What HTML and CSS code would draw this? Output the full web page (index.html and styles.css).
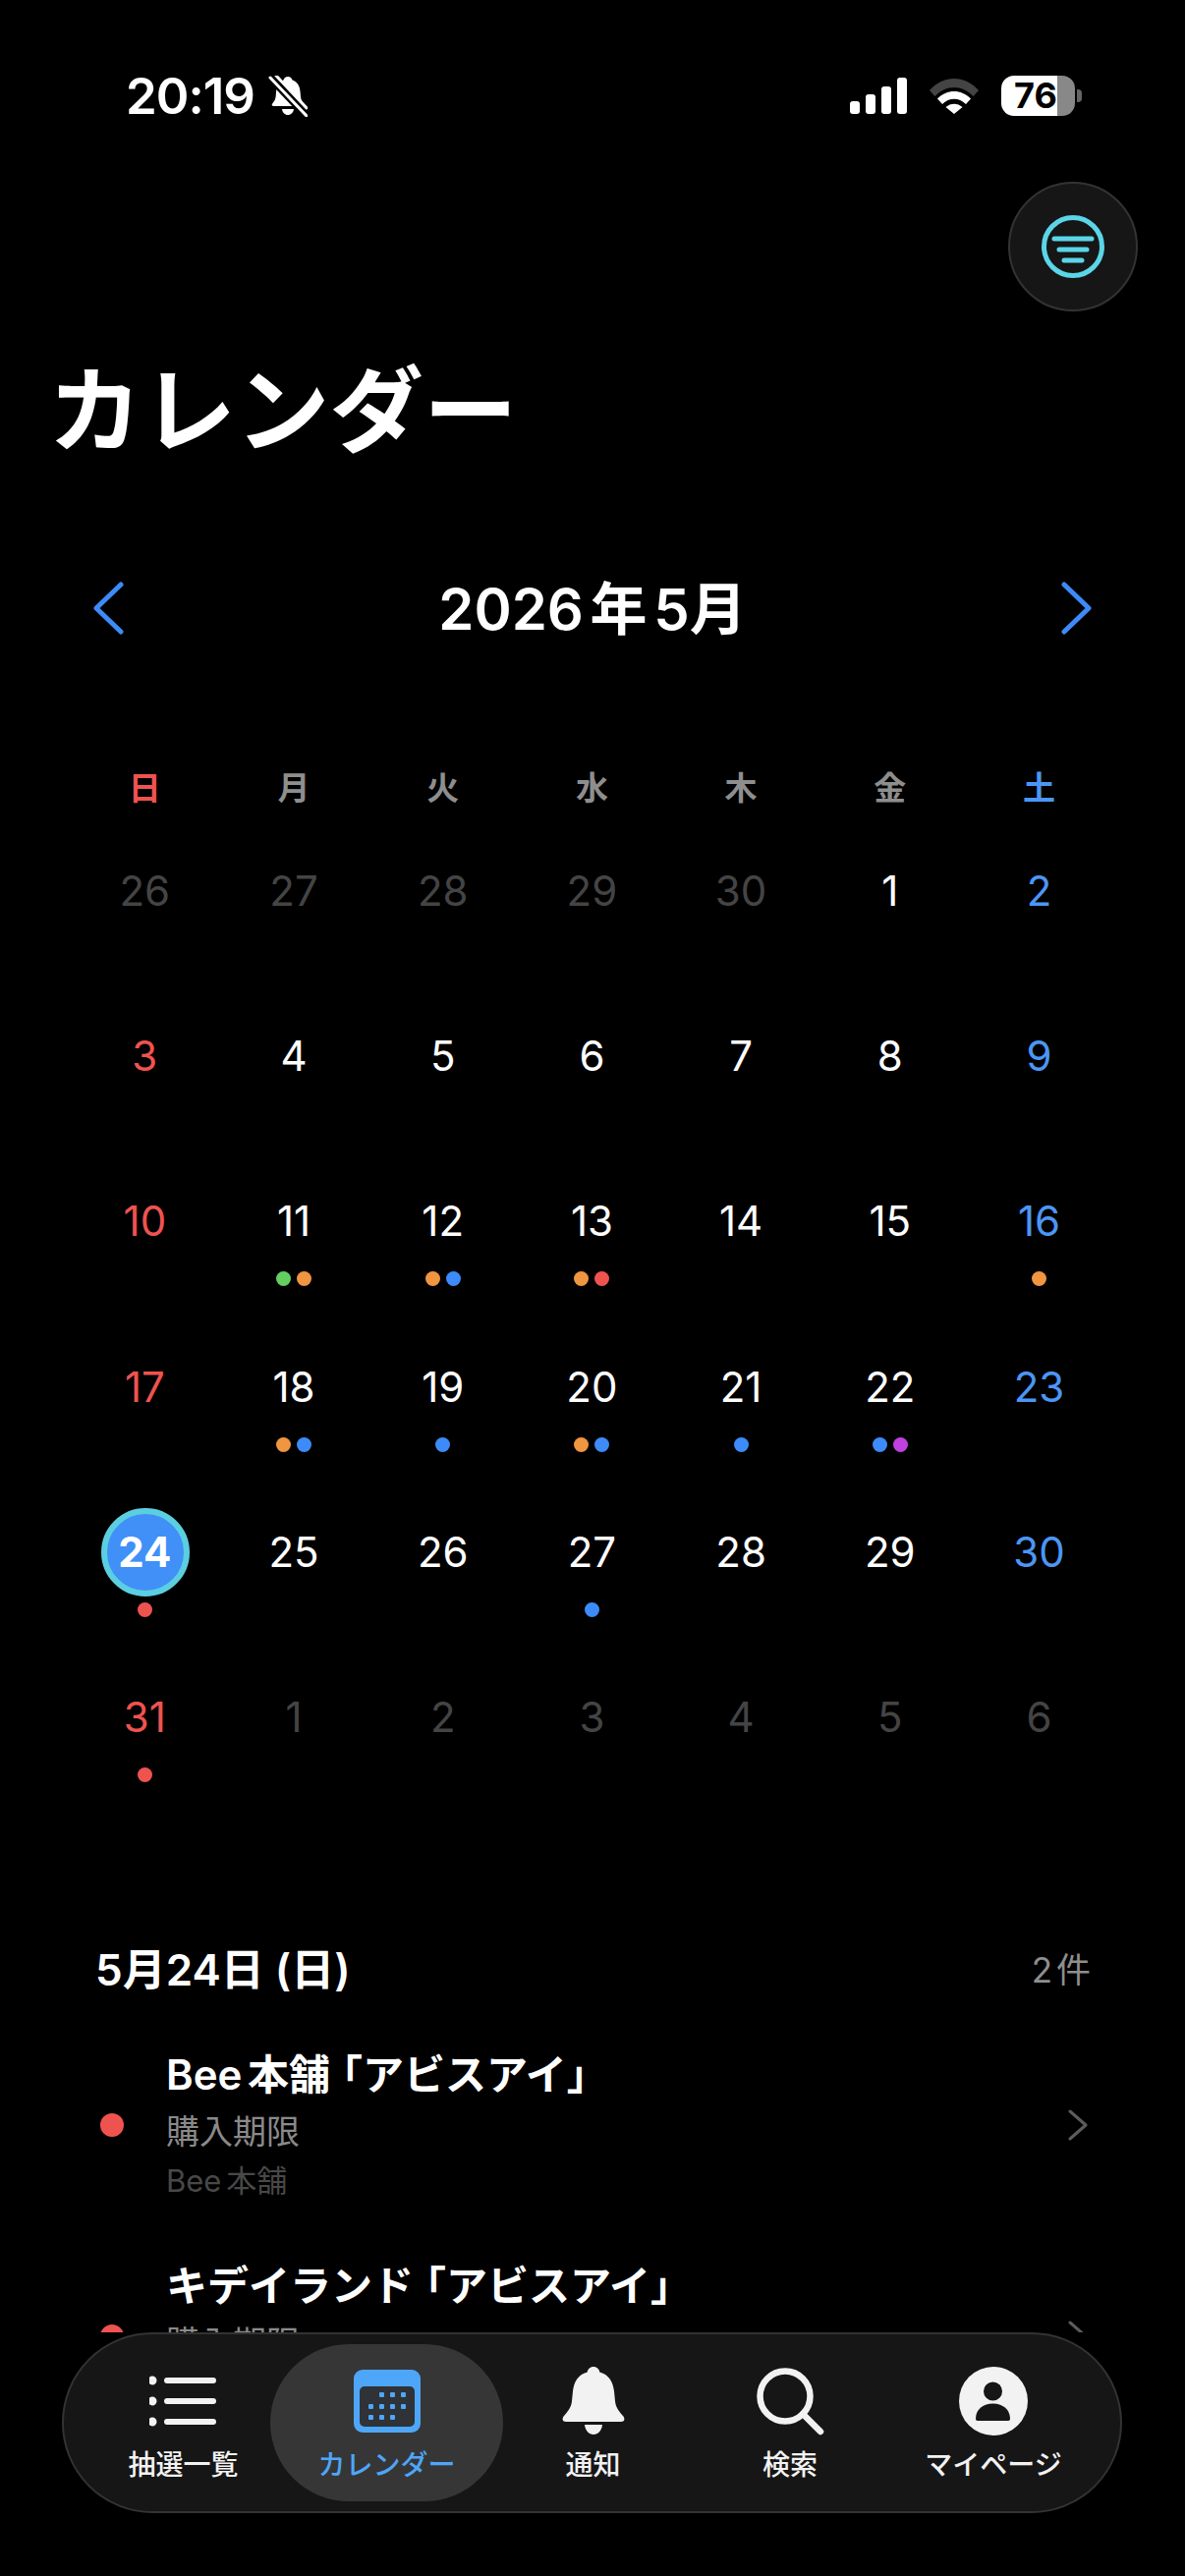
FILE: index.html
```html
<!DOCTYPE html>
<html lang="ja">
  <head>
    <meta charset="UTF-8" />
    <meta name="viewport" content="width=device-width, initial-scale=1.0" />
    <title>カレンダー</title>
    <link rel="stylesheet" href="styles.css">
  </head>
  <body>
    <main id="screen">
      <div class="status">
        <div class="status-left">
          <span class="time">20:19</span>
          <svg class="bell-off" width="40" height="42" viewBox="0 0 40 42">
            <path d="M20 1c2.4 0 4 1.500 4.600 3.600 5 1.800 7.400 6 7.900 11.400l.5 5.500c.2 2.800 1.500 4.700 3.300 6.900.9 1.200.3 2.600-1.300 2.600H5.500c-1.700 0-2.300-1.500-1.300-2.600 1.800-2.200 3.100-4.100 3.400-6.900l.5-5.500c.4-5 2.500-9.300 7.200-11.200C16 2.600 17.600 1 20 1zM14 34h12c-.4 3.500-2.900 6-6 6s-5.600-2.500-6-6z" fill="#fff"/>
            <path d="M2 1l37 39" stroke="#000" stroke-width="9"/>
            <path d="M2 2l37 39M8 0l31 33" stroke="#fff" stroke-width="3" stroke-linecap="round"/>
          </svg>
        </div>
        <div class="status-right">
          <div class="signal">
            <i class="bar-1"></i><i class="bar-2"></i><i class="bar-3"></i><i class="bar-4"></i>
          </div>
          <svg class="wifi" width="52" height="37" viewBox="0 0 52 37">
            <path d="M1 13C15-3 37-3 51 13l-5.500 6C34 7 18 7 6.500 19z" fill="#444"/>
            <path d="M9 21.500c9.500-10 24.500-10 34 0l-5 5.500c-7-7-17-7-24 0z" fill="#fff"/>
            <path d="M17.500 30c5-4.500 12-4.500 17 0L26 37z" fill="#fff"/>
          </svg>
          <div class="battery"><span class="battery-level">76</span></div>
          <i class="battery-cap"></i>
        </div>
      </div>

      <div class="top-actions">
        <button class="filter-btn">
          <svg width="66" height="66" viewBox="0 0 66 66" fill="none" stroke="#5bd5e8">
            <circle cx="33" cy="33" r="29.500" stroke-width="5"/>
            <path d="M14 25h38M19 36h28M24 47h18" stroke-width="5" stroke-linecap="round"/>
          </svg>
        </button>
      </div>

      <h1 class="page-title">カレンダー</h1>

      <div class="month-nav">
        <svg width="34" height="54" viewBox="0 0 34 54" fill="none"><path d="M30 3L5 27l25 24" stroke="#3d8bf8" stroke-width="5" stroke-linecap="round" stroke-linejoin="round"/></svg>
        <span class="month-label">2026 年 5月</span>
        <svg width="34" height="54" viewBox="0 0 34 54" fill="none"><path d="M4 3l25 24L4 51" stroke="#3d8bf8" stroke-width="5" stroke-linecap="round" stroke-linejoin="round"/></svg>
      </div>

      <div class="week">
        <span class="sun">日</span><span>月</span><span>火</span><span>水</span><span>木</span><span>金</span><span class="sat">土</span>
      </div>

      <div class="days">
        <div class="day out"><span class="num">26</span></div>
        <div class="day out"><span class="num">27</span></div>
        <div class="day out"><span class="num">28</span></div>
        <div class="day out"><span class="num">29</span></div>
        <div class="day out"><span class="num">30</span></div>
        <div class="day"><span class="num">1</span></div>
        <div class="day sat"><span class="num">2</span></div>

        <div class="day sun"><span class="num">3</span></div>
        <div class="day"><span class="num">4</span></div>
        <div class="day"><span class="num">5</span></div>
        <div class="day"><span class="num">6</span></div>
        <div class="day"><span class="num">7</span></div>
        <div class="day"><span class="num">8</span></div>
        <div class="day sat"><span class="num">9</span></div>

        <div class="day sun"><span class="num">10</span></div>
        <div class="day"><span class="num">11</span><div class="dots"><i class="green"></i><i class="orange"></i></div></div>
        <div class="day"><span class="num">12</span><div class="dots"><i class="orange"></i><i class="blue"></i></div></div>
        <div class="day"><span class="num">13</span><div class="dots"><i class="orange"></i><i class="red"></i></div></div>
        <div class="day"><span class="num">14</span></div>
        <div class="day"><span class="num">15</span></div>
        <div class="day sat"><span class="num">16</span><div class="dots"><i class="orange"></i></div></div>

        <div class="day sun"><span class="num">17</span></div>
        <div class="day"><span class="num">18</span><div class="dots"><i class="orange"></i><i class="blue"></i></div></div>
        <div class="day"><span class="num">19</span><div class="dots"><i class="blue"></i></div></div>
        <div class="day"><span class="num">20</span><div class="dots"><i class="orange"></i><i class="blue"></i></div></div>
        <div class="day"><span class="num">21</span><div class="dots"><i class="blue"></i></div></div>
        <div class="day"><span class="num">22</span><div class="dots"><i class="blue"></i><i class="purple"></i></div></div>
        <div class="day sat"><span class="num">23</span></div>

        <div class="day today"><span class="num">24</span><div class="dots"><i class="red"></i></div></div>
        <div class="day"><span class="num">25</span></div>
        <div class="day"><span class="num">26</span></div>
        <div class="day"><span class="num">27</span><div class="dots"><i class="blue"></i></div></div>
        <div class="day"><span class="num">28</span></div>
        <div class="day"><span class="num">29</span></div>
        <div class="day sat"><span class="num">30</span></div>

        <div class="day sun"><span class="num">31</span><div class="dots"><i class="red"></i></div></div>
        <div class="day out"><span class="num">1</span></div>
        <div class="day out"><span class="num">2</span></div>
        <div class="day out"><span class="num">3</span></div>
        <div class="day out"><span class="num">4</span></div>
        <div class="day out"><span class="num">5</span></div>
        <div class="day out"><span class="num">6</span></div>
      </div>

      <div class="list-head">
        <span class="list-date">5月24日 (日)</span>
        <span class="list-count">2 件</span>
      </div>

      <div class="item">
        <i class="item-dot"></i>
        <div class="item-text">
          <div class="item-title">Bee 本舗<span class="open">「</span>アビスアイ」</div>
          <div class="item-sub">購入期限</div>
          <div class="item-shop">Bee 本舗</div>
        </div>
        <svg class="item-arrow" width="22" height="32" viewBox="0 0 22 32" fill="none"><path d="M3 2l16 14L3 30" stroke="#5c5c5c" stroke-width="3" stroke-linecap="round" stroke-linejoin="round"/></svg>
      </div>
      <div class="item">
        <i class="item-dot"></i>
        <div class="item-text">
          <div class="item-title">キデイランド<span class="open">「</span>アビスアイ」</div>
          <div class="item-sub">購入期限</div>
        </div>
        <svg class="item-arrow" width="22" height="32" viewBox="0 0 22 32" fill="none"><path d="M3 2l16 14L3 30" stroke="#5c5c5c" stroke-width="3" stroke-linecap="round" stroke-linejoin="round"/></svg>
      </div>
    </main>

    <nav class="tabbar">
      <div class="tab">
        <svg width="70" height="70" viewBox="0 0 70 70" fill="#f2f2f2">
          <circle cx="3" cy="14" r="4.500"/><circle cx="3" cy="35" r="4.500"/><circle cx="3" cy="56" r="4.500"/>
          <rect x="15" y="11" width="53" height="6" rx="3"/><rect x="15" y="32" width="53" height="6" rx="3"/><rect x="15" y="53" width="53" height="6" rx="3"/>
        </svg>
        <span>抽選一覧</span>
      </div>
      <div class="tab active">
        <svg width="70" height="70" viewBox="0 0 70 70">
          <rect x="1" y="3" width="68" height="64" rx="9" fill="#4ea6f8"/>
          <rect x="7" y="20" width="56" height="41" rx="5" fill="#2f3236"/>
          <g fill="#4ea6f8">
            <rect x="27" y="26" width="5" height="5" rx="1"/><rect x="38" y="26" width="5" height="5" rx="1"/><rect x="49" y="26" width="5" height="5" rx="1"/>
            <rect x="16" y="38" width="5" height="5" rx="1"/><rect x="27" y="38" width="5" height="5" rx="1"/><rect x="38" y="38" width="5" height="5" rx="1"/><rect x="49" y="38" width="5" height="5" rx="1"/>
            <rect x="16" y="49" width="5" height="5" rx="1"/><rect x="27" y="49" width="5" height="5" rx="1"/><rect x="38" y="49" width="5" height="5" rx="1"/>
          </g>
        </svg>
        <span>カレンダー</span>
      </div>
      <div class="tab">
        <svg width="70" height="70" viewBox="0 0 70 70" fill="#f2f2f2">
          <path d="M35 0c3.500 0 6 2.500 6.300 5.500C51 8 55 16 56 25l1 10c.6 6 3 9 8 15 2.500 3 1.500 6-2 6H7c-3.500 0-4.500-3-2-6 5-6 7.400-9 8-15l1-10c1-9 5-17 14.700-19.500C29 2.500 31.500 0 35 0z"/>
          <path d="M26 59h18c-.5 6-4.500 10-9 10s-8.500-4-9-10z"/>
        </svg>
        <span>通知</span>
      </div>
      <div class="tab">
        <svg width="70" height="70" viewBox="0 0 70 70" fill="none" stroke="#f2f2f2" stroke-width="6.500" stroke-linecap="round">
          <circle cx="30" cy="30" r="25.500"/>
          <path d="M48 48l18 18"/>
        </svg>
        <span>検索</span>
      </div>
      <div class="tab">
        <svg width="70" height="70" viewBox="0 0 70 70">
          <circle cx="35" cy="35" r="35" fill="#f2f2f2"/>
          <circle cx="34.500" cy="25" r="9.500" fill="#161616"/>
          <path d="M17 53c0-10 8-15.500 17.500-15.500S52 43 52 53c0 1.300-.7 2-2 2H19c-1.300 0-2-.7-2-2z" fill="#161616"/>
        </svg>
        <span>マイページ</span>
      </div>
    </nav>
  </body>
</html>
```

FILE: styles.css
```css
*,
*::before {
  box-sizing: border-box;
}
body {
  margin: 0;
  background: #000;
  color: #fff;
  font-family: Inter, "Noto Sans CJK JP", sans-serif;
}
#screen {
  height: 2374px;
  overflow: hidden;
}
i {
  display: block;
}

/* status bar */
.status {
  display: flex;
  justify-content: space-between;
  height: 185px;
  padding: 77px 105px 0 128px;
}
.status-left {
  display: flex;
  gap: 14px;
  height: 41px;
  align-items: center;
}
.time {
  font-size: 51px;
  line-height: 41px;
  font-weight: 600;
  letter-spacing: -1px;
}
.status-right {
  display: flex;
  align-items: flex-start;
  height: 41px;
}
.signal {
  display: flex;
  align-items: flex-end;
  gap: 6px;
  height: 37px;
  margin-top: 2px;
  margin-right: 22px;
}
.signal i {
  width: 10px;
  background: #fff;
  border-radius: 3px;
}
.bar-1 { height: 13px; }
.bar-2 { height: 20px; }
.bar-3 { height: 28px; }
.bar-4 { height: 37px; }
.wifi {
  margin-top: 2px;
  margin-right: 22px;
}
.battery {
  width: 75px;
  height: 41px;
  border-radius: 13px;
  background: linear-gradient(90deg, #fff 76%, #888 76%);
  color: #000;
  text-align: center;
}
.battery-level {
  display: block;
  width: 70px;
  font-size: 36px;
  line-height: 41px;
  font-weight: 700;
}
.battery-cap {
  width: 5px;
  height: 13px;
  margin: 14px 0 0 2px;
  background: #666;
  border-radius: 0 4px 4px 0;
}

.top-actions {
  display: flex;
  justify-content: flex-end;
  padding-right: 48px;
}
.filter-btn {
  display: flex;
  align-items: center;
  justify-content: center;
  width: 132px;
  height: 132px;
  padding: 0;
  background: #161616;
  border: 2px solid #333;
  border-radius: 50%;
}
.page-title {
  margin: 51px 0 0 49px;
  font-size: 95.5px;
  line-height: 100px;
  font-weight: 700;
}

/* month */
.month-nav {
  display: flex;
  align-items: center;
  justify-content: space-between;
  height: 80px;
  margin-top: 111px;
  padding: 0 93px;
}
.month-label {
  padding-bottom: 6px;
  font-size: 58px;
  font-weight: 600;
  word-spacing: -8px;
}

/* calendar grid */
.week,
.days {
  display: grid;
  grid-template-columns: repeat(7, 151.7px);
  margin-left: 71.5px;
  text-align: center;
}
.week {
  height: 44px;
  margin-top: 121px;
  font-size: 33px;
  line-height: 44px;
  font-weight: 600;
  color: #8e8e8e;
}
.days {
  margin-top: 58px;
  grid-auto-rows: 168.2px;
}
.week .sun { color: #ef5350; }
.week .sat { color: #4c96f5; }
.num {
  display: block;
  font-size: 42px;
  line-height: 50px;
}
.sun .num { color: #ef5350; }
.sat .num { color: #4c96f5; }
.out .num { color: #444; }
.today .num {
  position: relative;
  font-weight: 700;
}
.today .num::before {
  content: "";
  position: absolute;
  z-index: -1;
  left: 31px;
  top: -20px;
  width: 90px;
  height: 90px;
  background: #4090f8;
  border: 6px solid #5bcfe0;
  border-radius: 50%;
}
.dots {
  display: flex;
  justify-content: center;
  gap: 6px;
  margin-top: 26px;
}
.dots i {
  width: 15px;
  height: 15px;
  border-radius: 50%;
}
.green { background: #63cf62; }
.orange { background: #f09540; }
.blue { background: #3d8bf8; }
.red { background: #ef5350; }
.purple { background: #c040e0; }

/* selected day list */
.list-head {
  display: flex;
  justify-content: space-between;
  align-items: center;
  height: 50px;
  margin-top: 86px;
  padding: 0 96px 0 97px;
}
.list-date {
  font-size: 44px;
  font-weight: 600;
}
.list-count {
  font-size: 35px;
  color: #8e8e8e;
  word-spacing: -6px;
}
.item {
  display: flex;
  align-items: center;
  margin: 60px 98px 58px 102px;
}
.item-dot {
  flex: none;
  width: 24px;
  height: 24px;
  margin-right: 43px;
  margin-bottom: 6px;
  background: #ef5350;
  border-radius: 50%;
}
.item-arrow {
  margin-bottom: 6px;
}
.item-text {
  flex: 1;
  min-height: 157px;
}
.item-title {
  font-size: 42px;
  line-height: 50px;
  font-weight: 600;
  word-spacing: -5px;
}
.item-title .open {
  margin-left: 12px;
  font-feature-settings: "halt";
}
.item-sub {
  margin-top: 9px;
  font-size: 34px;
  line-height: 48px;
  color: #8a8a8a;
}
.item-shop {
  margin-top: 2px;
  font-size: 31px;
  line-height: 48px;
  color: #484848;
  word-spacing: -4px;
}
.item + .item {
  margin-top: 0;
}

/* tab bar */
.tabbar {
  display: grid;
  grid-template-columns: 177px 237px 183px 218px 196px;
  height: 184px;
  margin: 0 64px 0 63px;
  padding: 10px 0 10px 33px;
  background: #161616;
  border: 2px solid #333;
  border-radius: 92px;
}
.tab {
  display: flex;
  flex-direction: column;
  align-items: center;
  padding-top: 23px;
  font-size: 28px;
  line-height: 36px;
  font-weight: 500;
  color: #f2f2f2;
}
.tab svg {
  margin-bottom: 12px;
}
.tab.active {
  background: #363636;
  border-radius: 80px;
  color: #4ea6f8;
}
```
